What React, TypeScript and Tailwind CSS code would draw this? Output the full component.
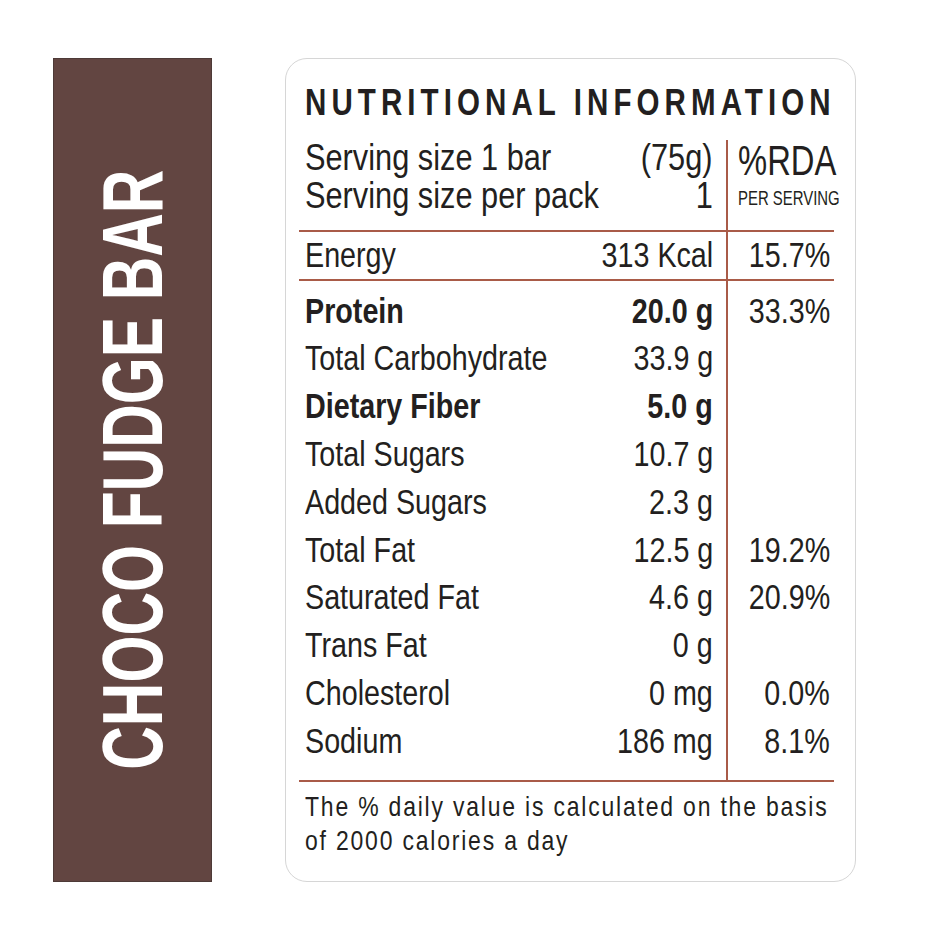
import React from 'react';

interface Nutrient {
  label: string;
  value: string;
  rda?: string;
  bold?: boolean;
}

const NUTRIENTS: Nutrient[] = [
  { label: 'Protein', value: '20.0 g', rda: '33.3%', bold: true },
  { label: 'Total Carbohydrate', value: '33.9 g' },
  { label: 'Dietary Fiber', value: '5.0 g', bold: true },
  { label: 'Total Sugars', value: '10.7 g' },
  { label: 'Added Sugars', value: '2.3 g' },
  { label: 'Total Fat', value: '12.5 g', rda: '19.2%' },
  { label: 'Saturated Fat', value: '4.6 g', rda: '20.9%' },
  { label: 'Trans Fat', value: '0 g' },
  { label: 'Cholesterol', value: '0 mg', rda: '0.0%' },
  { label: 'Sodium', value: '186 mg', rda: '8.1%' }
];

// Liberation Sans squeezed horizontally to stand in for a condensed face
function Cond({
  children,
  right = false,
  className = ''
}: {
  children: React.ReactNode;
  right?: boolean;
  className?: string;
}) {
  return (
    <span
      className={`inline-block whitespace-nowrap ${right ? 'origin-right shrink-0' : 'origin-left min-w-0'} ${className || 'scale-x-[0.82]'}`}
    >
      {children}
    </span>
  );
}

function Rule() {
  return <div className="h-[2px] w-full bg-[#a95b48]" />;
}

export default function App() {
  return (
    <div className="w-[940px] h-[940px] bg-white flex pt-[58px] pl-[53px] font-['Liberation_Sans',Arial,sans-serif] text-[#231f20]">
      {/* Side label */}
      <div className="w-[159px] h-[824px] shrink-0 bg-[#624541] border border-[#4d3a37] flex items-center justify-center overflow-hidden">
        <span className="[writing-mode:vertical-rl] rotate-180 scale-y-[0.71] text-white font-bold text-[85px] leading-none whitespace-nowrap">
          CHOCO FUDGE BAR
        </span>
      </div>

      {/* Nutrition card */}
      <div className="ml-[73px] w-[571px] h-[824px] shrink-0 border border-[#d6d6d6] rounded-[22px] pl-[13px] flex flex-col">
        <div className="w-[535px] flex flex-col">
          {/* Title */}
          <div className="h-[81px] pt-[26px] pl-[6px]">
            <h1 className="text-[36px] leading-none font-bold">
              <Cond className="scale-x-[0.82] tracking-[6.2px]">NUTRITIONAL INFORMATION</Cond>
            </h1>
          </div>

          {/* Serving */}
          <div className="flex h-[90px]">
            <div className="w-[427px] shrink-0 pl-[6px] pr-[13px] -mt-[2px] text-[37.5px] leading-[38px]">
              <div className="flex justify-between">
                <Cond>Serving size 1 bar</Cond>
                <Cond right>(75g)</Cond>
              </div>
              <div className="flex justify-between">
                <Cond>Serving size per pack</Cond>
                <Cond right>1</Cond>
              </div>
            </div>
            <div className="flex-1 min-w-0 border-l-2 border-[#a95b48] pl-[10px]">
              <div className="text-[42px] leading-none">
                <Cond className="scale-x-[0.78]">%RDA</Cond>
              </div>
              <div className="mt-[5px] text-[21px] leading-none">
                <Cond className="scale-x-[0.71]">PER SERVING</Cond>
              </div>
            </div>
          </div>
          <Rule />

          {/* Energy */}
          <div className="flex h-[47px] text-[35px]">
            <div className="w-[427px] shrink-0 pl-[6px] pr-[13px] flex items-center justify-between">
              <Cond>Energy</Cond>
              <Cond right>313 Kcal</Cond>
            </div>
            <div className="flex-1 min-w-0 border-l-2 border-[#a95b48] pr-[4px] flex items-center justify-end">
              <Cond right>15.7%</Cond>
            </div>
          </div>
          <Rule />

          {/* Nutrients */}
          <div className="flex">
            <div className="w-[427px] shrink-0 pt-[6px] pb-[15px]">
              {NUTRIENTS.map((n) => (
                <div
                  key={n.label}
                  className={`h-[47.8px] pl-[6px] pr-[13px] flex items-center justify-between text-[35px] ${n.bold ? 'font-bold' : ''}`}
                >
                  <Cond>{n.label}</Cond>
                  <Cond right>{n.value}</Cond>
                </div>
              ))}
            </div>
            <div className="flex-1 min-w-0 border-l-2 border-[#a95b48] pt-[6px] pr-[4px]">
              {NUTRIENTS.map((n) => (
                <div key={n.label} className="h-[47.8px] flex items-center justify-end text-[35px]">
                  {n.rda ? <Cond right>{n.rda}</Cond> : null}
                </div>
              ))}
            </div>
          </div>
          <Rule />

          {/* Footnote */}
          <div className="pt-[8px] pl-[6px] text-[28px] leading-[34px]">
            <div>
              <Cond className="scale-x-[0.82] tracking-[2.2px]">The % daily value is calculated on the basis</Cond>
            </div>
            <div>
              <Cond className="scale-x-[0.82] tracking-[2.2px]">of 2000 calories a day</Cond>
            </div>
          </div>
        </div>
      </div>
    </div>
  );
}
